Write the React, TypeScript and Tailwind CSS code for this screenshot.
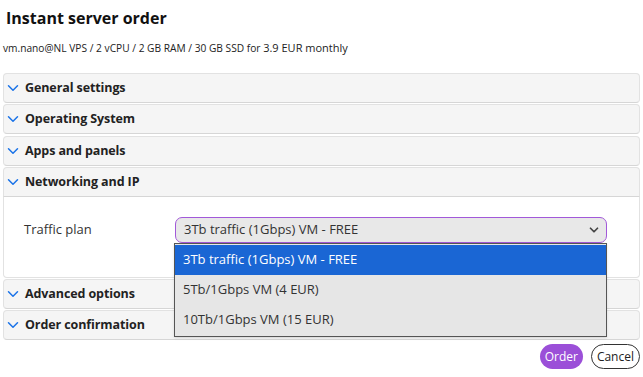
import { ChevronDown } from 'lucide-react'

const sections = ['General settings', 'Operating System', 'Apps and panels']
const options = ['3Tb traffic (1Gbps) VM - FREE', '5Tb/1Gbps VM (4 EUR)', '10Tb/1Gbps VM (15 EUR)']

function Header({ title, open }: { title: string; open?: boolean }) {
  return (
    <div
      className={`h-[30px] flex items-center gap-[3px] pl-0 bg-[#f5f5f5] border border-[#e2e2e2] border-b-[#d6d6d6] ${
        open ? 'rounded-t-[4px]' : 'rounded-[4px]'
      }`}
    >
      <ChevronDown size={18} strokeWidth={2} className="text-[#1a73e8]" />
      <span className="text-[12.5px] font-bold text-[#222] tracking-[-0.1px]">{title}</span>
    </div>
  )
}

export default function App() {
  return (
    <div className="w-[643px] h-[377px] bg-white relative overflow-hidden font-['Open_Sans',sans-serif] text-[#222]">
      <h1 className="pl-[6px] pt-[6px] text-[16px] leading-[24px] font-bold text-[#111]">Instant server order</h1>
      <p className="pl-[3px] mt-[11px] text-[10.2px] leading-[14px] text-[#222]">
        vm.nano@NL VPS / 2 vCPU / 2 GB RAM / 30 GB SSD for <span className="text-[11px]">3.9 EUR monthly</span>
      </p>

      <div className="mx-[3px] mt-[18px] flex flex-col gap-[1px]">
        <Header title={sections[0]} />
        <Header title={sections[1]} />
        <div className="mt-[1px]">
          <Header title={sections[2]} />
        </div>
        <div>
          <Header title="Networking and IP" open />
          <div className="h-[81px] border border-t-0 border-[#e2e2e2] rounded-b-[4px] flex items-start pt-[20px] pl-[20px]">
            <span className="w-[151px] h-[26px] flex items-center text-[13px] text-[#333]">Traffic plan</span>
            <div className="relative w-[432px]">
              <div className="h-[26px] flex items-center justify-between pl-[8px] pr-[5px] bg-[#e8e8e8] border border-[#a259d9] rounded-[7px] text-[13px] text-[#333]">
                <span>{options[0]}</span>
                <ChevronDown size={14} strokeWidth={3} className="text-[#444]" />
              </div>
              <div className="absolute left-[-1px] top-[26px] w-[433px] py-[1px] bg-[#e6e6e6] border border-[#555] z-10 shadow">
                {options.map((o, i) => (
                  <div
                    key={o}
                    className={`h-[30px] flex items-center px-[8px] text-[13px] ${
                      i === 0 ? 'bg-[#1a66d4] text-white' : 'text-[#333]'
                    }`}
                  >
                    {o}
                  </div>
                ))}
              </div>
            </div>
          </div>
        </div>
        <Header title="Advanced options" />
        <Header title="Order confirmation" />
      </div>

      <div className="flex justify-end gap-[8px] pr-[3px] mt-[4px]">
        <button className="h-[25px] px-[5px] rounded-full bg-[#9b4fd8] text-white text-[12px]">Order</button>
        <button className="h-[25px] px-[5px] rounded-full border border-[#333] text-[#222] text-[12px]">Cancel</button>
      </div>
    </div>
  )
}
